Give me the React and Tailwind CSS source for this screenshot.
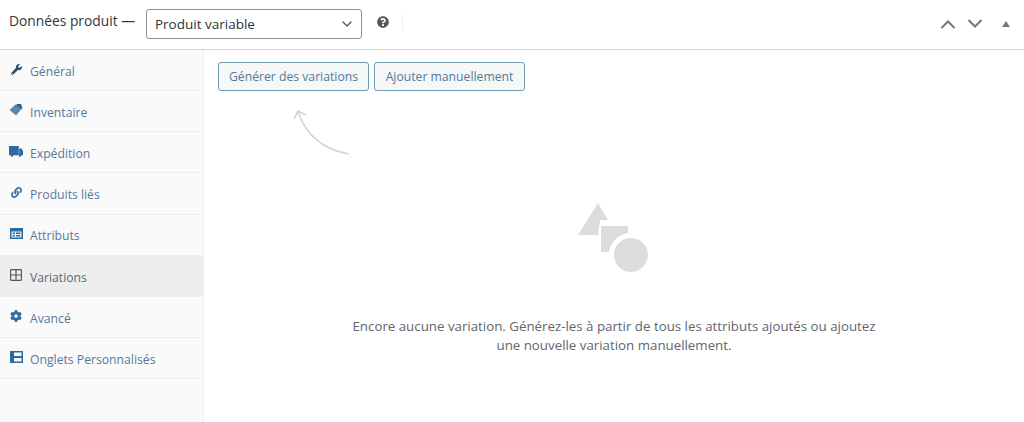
import React from "react";
import { FaWrench, FaLink, FaCog, FaQuestionCircle } from "react-icons/fa";
import { ChevronDown } from "lucide-react";

function TagIcon() {
  return (
    <svg width="14" height="12" viewBox="0 0 14 12" className="text-[#5b8ab0]">
      <path fill="currentColor" d="M0.500 6L6.500 0.500L13 4.500L7 11.500Z" />
      <path fill="#2d5f88" d="M8 0H12L13.500 4.200L12.600 5L7 1.200Z" />
    </svg>
  );
}

function TruckIcon() {
  return (
    <svg width="14" height="11" viewBox="0 0 14 11" className="text-[#2d6a9f]">
      <path fill="currentColor" d="M0 0H9.800V9.200H0ZM10.200 2.500H12.500L14 5V9.200H10.200Z" />
      <circle cx="3" cy="9.500" r="1.300" fill="currentColor" />
      <circle cx="11" cy="9.500" r="1.300" fill="currentColor" />
    </svg>
  );
}

function AttrIcon() {
  return (
    <svg width="13" height="11" viewBox="0 0 13 11" className="text-[#2d6a9f]">
      <path fill="currentColor" fillRule="evenodd" d="M0 0h13v11H0zM1.500 3.500v6h10v-6zM2.500 4.500h2.500v1.500h-2.500zM6 4.500h4.500v1.500h-4.500zM2.500 7h2.500v1.500h-2.500zM6 7h4.500v1.500h-4.500z" />
    </svg>
  );
}

function GridIcon() {
  return (
    <svg width="12" height="12" viewBox="0 0 12 12" fill="none" stroke="currentColor" strokeWidth="1.200" className="text-[#555]">
      <rect x="0.600" y="0.600" width="10.800" height="10.800" rx="0.800" />
      <path d="M6 0.600v10.800M0.600 6h10.800" />
    </svg>
  );
}

function TabsIcon() {
  return (
    <svg width="13" height="12" viewBox="0 0 13 12" className="text-[#2d6a9f]">
      <path fill="currentColor" fillRule="evenodd" d="M0 0h13v12H0zM4 1.500v3.500h7.500V1.500zM4 7v3.500h7.500V7z" />
    </svg>
  );
}

function Chevron({ up }) {
  return (
    <svg width="16" height="10" viewBox="0 0 16 10" fill="none" stroke="#777" strokeWidth="2">
      <path d={up ? "M1.500 9L8 2.500L14.500 9" : "M1.500 1L8 7.500L14.500 1"} />
    </svg>
  );
}

const tabs = [
  { label: "Général", icon: <FaWrench size={11} className="text-[#2c4f6e]" /> },
  { label: "Inventaire", icon: <TagIcon /> },
  { label: "Expédition", icon: <TruckIcon /> },
  { label: "Produits liés", icon: <FaLink size={11} className="text-[#3a6f9c]" /> },
  { label: "Attributs", icon: <AttrIcon /> },
  { label: "Variations", icon: <GridIcon />, active: true },
  { label: "Avancé", icon: <FaCog size={12} className="text-[#2d6a9f]" /> },
  { label: "Onglets Personnalisés", icon: <TabsIcon /> },
];

function Tab({ tab }) {
  return (
    <div className={`h-[41.150px] flex items-center pl-[9px] gap-[7px] border-b border-[#eeeeee] ${tab.active ? "bg-[#eeeeee] text-[#5f666d]" : "text-[#54799c]"}`}>
      <span className="w-[14px] flex justify-center -translate-y-[1px]">{tab.icon}</span>
      <span className="text-[12.200px] translate-y-[2px]">{tab.label}</span>
    </div>
  );
}

export default function App() {
  return (
    <div className="w-[1024px] h-[422px] bg-white overflow-hidden flex flex-col font-['Open_Sans','Noto_Sans',sans-serif]">
      <div className="h-[50px] shrink-0 flex items-center border-b border-[#d5d5d5] pl-[9px] pr-[14px]">
        <span className="text-[13.800px] text-[#32373c] -translate-y-[3px]">Données produit —</span>
        <div className="ml-[11px] w-[216px] h-[30px] border border-[#8c8f94] rounded-[3px] flex items-center justify-between pl-[8px] pr-[6px] -translate-y-[1px]">
          <span className="text-[13.500px] text-[#2c3338] translate-y-[1px]">Produit variable</span>
          <ChevronDown size={16} strokeWidth={2} className="text-[#50575e]" />
        </div>
        <FaQuestionCircle size={12} className="ml-[15px] text-[#555] -translate-y-[3px]" />
        <div className="ml-[13px] w-px h-[16px] bg-[#eeeeee] -translate-y-[3px]" />
        <div className="ml-auto flex items-center -translate-y-[1px]">
          <Chevron up />
          <div className="ml-[11px]">
            <Chevron />
          </div>
          <div className="ml-[19px] w-0 h-0 border-x-[4px] border-x-transparent border-b-[6px] border-b-[#777]" />
        </div>
      </div>
      <div className="flex flex-1 min-h-0">
        <div className="w-[204px] shrink-0 bg-[#fafafa] border-r border-[#eeeeee]">
          {tabs.map((tab) => (
            <Tab key={tab.label} tab={tab} />
          ))}
        </div>
        <div className="flex-1 relative">
          <div className="pl-[14px] pt-[12px] flex gap-[5px]">
            <button className="h-[29px] w-[151px] pt-[2px] border border-[#6f9bb5] rounded-[3px] bg-[#f6f7f7] text-[12.200px] text-[#54799c]">Générer des variations</button>
            <button className="h-[29px] w-[151px] pt-[2px] border border-[#6f9bb5] rounded-[3px] bg-[#f6f7f7] text-[12.200px] text-[#54799c]">Ajouter manuellement</button>
          </div>
          <svg width="70" height="60" viewBox="0 0 70 60" fill="none" stroke="#d3d3d3" strokeWidth="1.600" className="absolute left-[85px] top-[57px]">
            <path d="M60 47C36 43 18 30 9 5" />
            <path d="M5 12L9 4L17 8" />
          </svg>
          <div className="flex flex-col items-center pt-[112px]">
            <svg width="72" height="72" viewBox="0 0 72 72">
              <path fill="#dcdcdc" d="M20 0L30 17H22L20 32H0Z" />
              <path fill="#dcdcdc" d="M23 23H50V30C40 32 33 38 31 49H23Z" />
              <circle cx="53" cy="52" r="17" fill="#dcdcdc" />
            </svg>
            <p className="mt-[42px] text-center text-[13.300px] leading-[19px] text-[#5f666d] w-[540px]">
              Encore aucune variation. Générez-les à partir de tous les attributs ajoutés ou ajoutez
              <br />
              une nouvelle variation manuellement.
            </p>
          </div>
        </div>
      </div>
    </div>
  );
}
